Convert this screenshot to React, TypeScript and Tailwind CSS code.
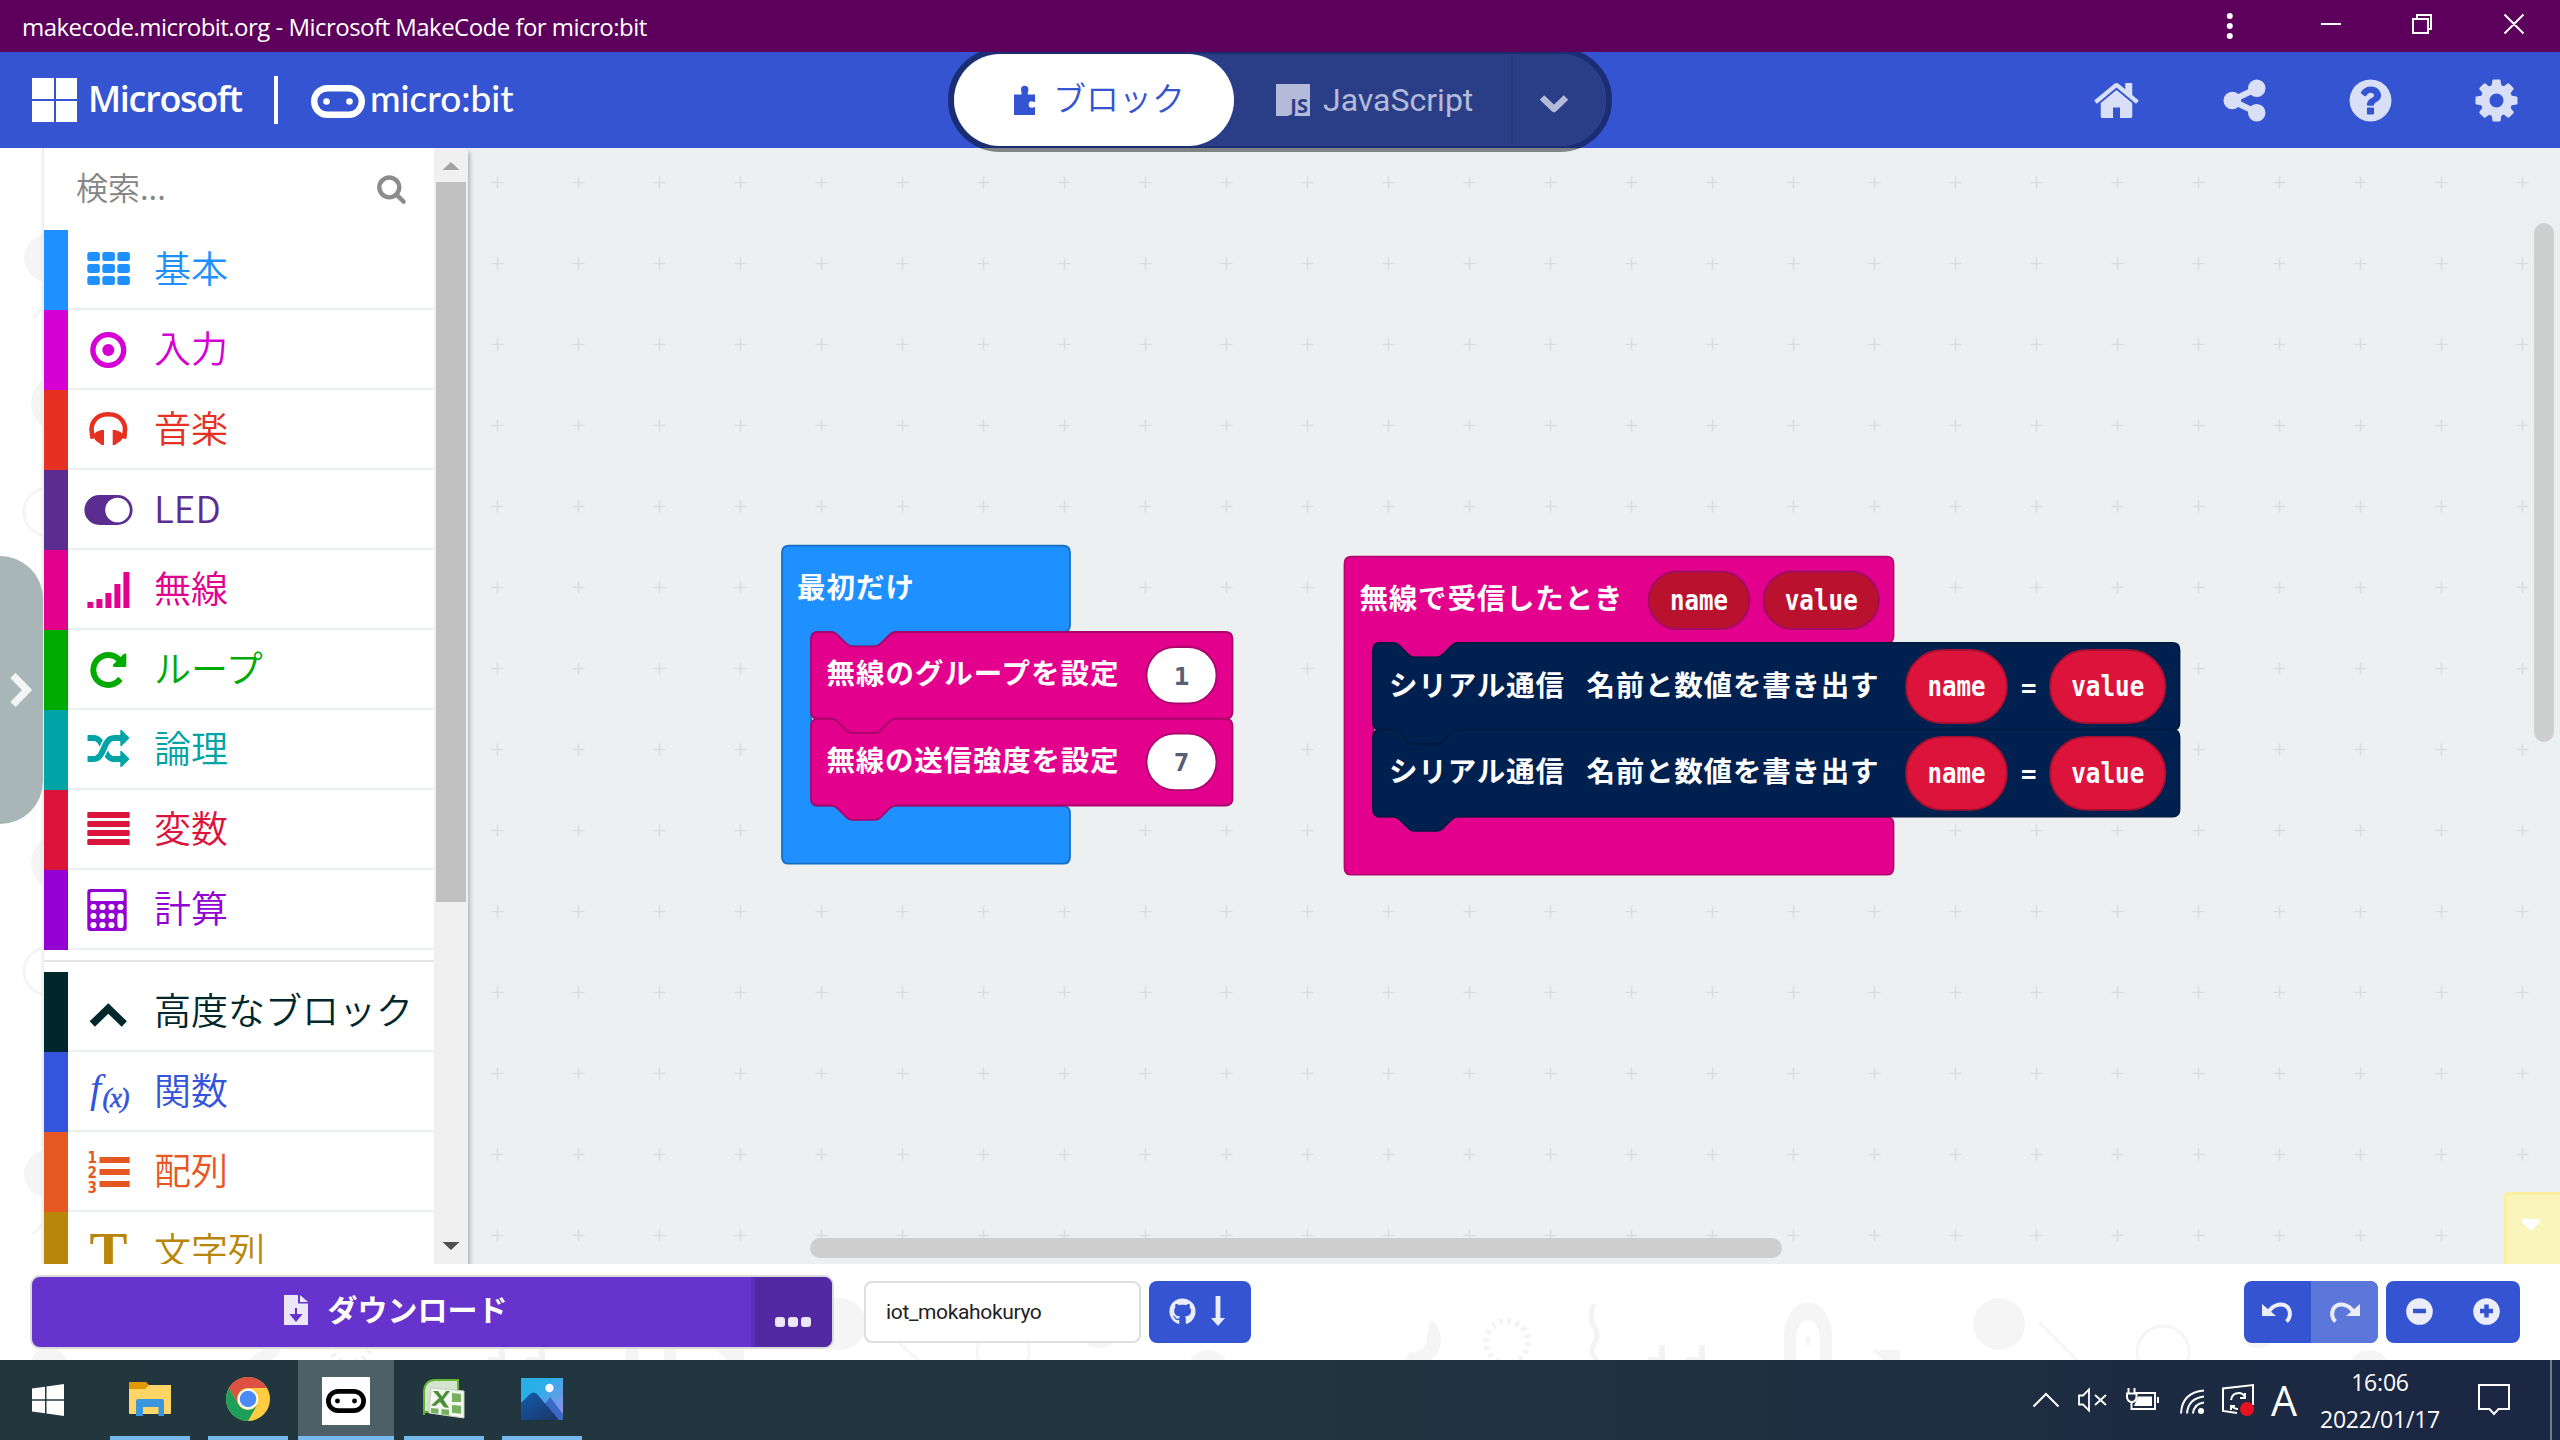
import type { ReactNode } from 'react';
import { FaGithub } from 'react-icons/fa';

const JP = "'Noto Sans CJK JP', sans-serif";

const P = {
  cog: 'M1024 896q0-106-75-181t-181-75-181 75-75 181 75 181 181 75 181-75 75-181zm512-109v222q0 12-8 23t-20 13l-185 28q-19 54-39 91 35 50 107 138 10 12 10 25t-9 23q-27 37-99 108t-94 71q-12 0-26-9l-138-108q-44 23-91 38-16 136-29 186-7 28-36 28h-222q-14 0-24.5-8.5t-11.5-21.5l-28-184q-49-16-90-37l-141 107q-10 9-25 9-14 0-25-11-126-114-165-168-7-10-7-23 0-12 8-23 15-21 51-66.5t54-70.5q-27-50-41-99l-183-27q-13-2-21-12.5t-8-23.5v-222q0-12 8-23t19-13l186-28q14-46 39-92-40-57-107-138-10-12-10-24 0-10 9-23 26-36 98.5-107.5t94.5-71.5q13 0 26 10l138 107q44-23 91-38 16-136 29-186 7-28 36-28h222q14 0 24.5 8.5t11.5 21.5l28 184q49 16 90 37l142-107q9-9 24-9 13 0 25 10 129 119 165 170 7 8 7 22 0 12-8 23-15 21-51 66.5t-54 70.5q26 50 41 98l183 28q13 2 21 12.5t8 23.5z',
  home: 'M1472 992v480q0 26-19 45t-45 19h-384v-384h-256v384h-384q-26 0-45-19t-19-45v-480q0-1 .5-3t.5-3l575-474 575 474q1 2 1 6zm223-69l-62 74q-8 9-21 11h-3q-13 0-21-7l-692-577-692 577q-12 8-24 7-13-2-21-11l-62-74q-8-10-7-23.5t11-21.5l719-599q32-26 76-26t76 26l244 204v-195q0-14 9-23t23-9h192q14 0 23 9t9 23v408l219 182q10 8 11 21.5t-7 23.5z',
  share: 'M1344 1024q133 0 226.5 93.5t93.5 226.5-93.5 226.5-226.5 93.5-226.5-93.5-93.5-226.5q0-12 2-34l-360-180q-92 86-218 86-133 0-226.5-93.5t-93.5-226.5 93.5-226.5 226.5-93.5q126 0 218 86l360-180q-2-22-2-34 0-133 93.5-226.5t226.5-93.5 226.5 93.5 93.5 226.5-93.5 226.5-226.5 93.5q-126 0-218-86l-360 180q2 22 2 34t-2 34l360 180q92-86 218-86z',
  help: 'M1024 1376v-192q0-14-9-23t-23-9h-192q-14 0-23 9t-9 23v192q0 14 9 23t23 9h192q14 0 23-9t9-23zm256-672q0-88-55.5-163t-138.5-116-170-41q-243 0-371 213-15 24 8 42l132 100q7 6 19 6 16 0 25-12 53-68 86-92 34-24 86-24 48 0 85.5 26t37.5 59q0 38-20 61t-68 45q-63 28-115.5 86.5t-52.5 125.5v36q0 14 9 23t23 9h192q14 0 23-9t9-23q0-19 21.5-49.5t54.5-49.5q32-18 49-28.5t46-35 44.5-48 28-60.5 12.5-81zm384 192q0 209-103 385.5t-279.5 279.5-385.5 103-385.5-103-279.5-279.5-103-385.5 103-385.5 279.5-279.5 385.5-103 385.5 103 279.5 279.5 103 385.5z',
  search: 'M1216 832q0-185-131.5-316.5t-316.5-131.5-316.5 131.5-131.5 316.5 131.5 316.5 316.5 131.5 316.5-131.5 131.5-316.5zm512 832q0 52-38 90t-90 38q-54 0-90-38l-343-342q-179 124-399 124-143 0-273.5-55.5t-225-150-150-225-55.5-273.5 55.5-273.5 150-225 225-150 273.5-55.5 273.5 55.5 225 150 150 225 55.5 273.5q0 220-124 399l343 343q37 37 37 90z',
  repeat: 'M1664 256v448q0 26-19 45t-45 19h-448q-42 0-59-40-17-39 14-69l138-138q-148-137-349-137-104 0-198.5 40.5t-163.5 109.5-109.5 163.5-40.5 198.5 40.5 198.5 109.5 163.5 163.5 109.5 198.5 40.5q119 0 225-52t179-147q7-10 23-12 15 0 25 9l137 138q9 8 9.5 20.5t-7.5 22.5q-109 132-264 204.5t-327 72.5q-156 0-298-61t-245-164-164-245-61-298 61-298 164-245 245-164 298-61q147 0 284.5 55.5t244.5 156.5l130-129q29-31 70-14 39 17 39 59z',
  random: 'M666 481q-60 92-137 273-22-45-37-72.5t-40.5-63.5-51-56.5-63-35-81.5-14.5h-224q-14 0-23-9t-9-23v-192q0-14 9-23t23-9h224q250 0 410 225zm1126 799q0 14-9 23l-320 320q-9 9-23 9-13 0-22.5-9.5t-9.5-22.5v-192q-32 0-85 .5t-81 1-73-1-71-5-64-10.5-63-18.5-58-28.5-59-40-55-53.5-56-69.5q59-93 136-273 22 45 37 72.5t40.5 63.5 51 56.5 63 35 81.5 14.5h256v-192q0-14 9-23t23-9q12 0 24 10l319 319q9 9 9 23zm0-896q0 14-9 23l-320 320q-9 9-23 9-13 0-22.5-9.5t-9.5-22.5v-192h-256q-48 0-87 15t-69 45-51 61.5-45 77.5q-32 62-78 171-29 66-49.5 111t-54 105-64 100-74 83-90 68.5-106.5 42-128 16.5h-224q-14 0-23-9t-9-23v-192q0-14 9-23t23-9h224q48 0 87-15t69-45 51-61.5 45-77.5q32-62 78-171 29-66 49.5-111t54-105 64-100 74-83 90-68.5 106.5-42 128-16.5h256v-192q0-14 9-23t23-9q12 0 24 10l319 319q9 9 9 23z',
};

function Glyph({ d, size, box = '0 0 1792 1792', className = '' }: { d: string; size: number; box?: string; className?: string }) {
  return (
    <svg width={size} height={size} viewBox={box} fill="currentColor" className={`shrink-0 ${className}`}>
      <path d={d} />
    </svg>
  );
}

/* ---------- Toolbox icons, drawn on a 56 x 56 grid ---------- */

const fa = (d: string) => (
  <svg x="7.3" y="8" width="42" height="42" viewBox="0 0 1792 1792">
    <path d={d} />
  </svg>
);

const icons: Record<string, ReactNode> = {
  grid: [7.3, 22.3, 37.3].flatMap((x) =>
    [11, 23, 35].map((y) => <rect key={`${x}-${y}`} x={x} y={y} width="12.6" height="9" rx="2.5" />),
  ),
  target: (
    <>
      <circle cx="28.3" cy="29" r="15.4" fill="none" stroke="currentColor" strokeWidth="5.4" />
      <circle cx="28.3" cy="29" r="6" />
    </>
  ),
  headphones: (
    <>
      <path
        d="M13.500 36.500C8 24 15 13.300 28.300 13.300S48.600 24 43.100 36.500"
        fill="none"
        stroke="currentColor"
        strokeWidth="4.600"
      />
      <path d="M24 29v15h-2.500c-1-2-6-3-7-6.500l-4 .5-1-5 5.500-.5c1-2.500 4.500-2.500 6.500-3.500zM32.700 29v15h2.500c1-2 6-3 7-6.500l4 .5 1-5-5.500-.5c-1-2.500-4.500-2.500-6.500-3.500z" />
    </>
  ),
  toggle: (
    <>
      <rect x="4.400" y="14" width="48.200" height="30" rx="15" />
      <circle cx="37.500" cy="29" r="12.300" fill="#fff" />
    </>
  ),
  signal: [41, 38, 32, 23, 11].map((y, i) => (
    <rect key={y} x={7.4 + i * 9} y={y} width="6" height={47 - y} rx="0.5" />
  )),
  repeat: fa(P.repeat),
  random: fa(P.random),
  lines: [11, 20, 29, 38].map((y) => <rect key={y} x="7.300" y={y} width="42.400" height="6" rx="1" />),
  calc: (
    <>
      <rect x="7.300" y="8" width="39.400" height="42" rx="3" />
      <rect x="10.300" y="11" width="33.400" height="9" rx="1.500" fill="#fff" />
      {[13.5, 22.5, 31.5].flatMap((x) =>
        [26, 35, 44].map((y) => <circle key={`${x}-${y}`} cx={x} cy={y} r="3.100" fill="#fff" />),
      )}
      <circle cx="40.500" cy="26" r="3.100" fill="#fff" />
      <rect x="37.400" y="32" width="6.200" height="15" rx="3.100" fill="#fff" />
    </>
  ),
  up: <path d="M12.300 41L28.300 25.500 44.300 41" fill="none" stroke="currentColor" strokeWidth="7.500" />,
  fx: (
    <>
      <text x="10" y="38.500" fontSize="40" fontStyle="italic" fontFamily="'Liberation Serif', serif">
        f
      </text>
      <text x="22.500" y="43.500" fontSize="27" fontStyle="italic" fontFamily="'Liberation Serif', serif" textLength="27" stroke="currentColor" strokeWidth="0.600">
        (x)
      </text>
    </>
  ),
  list: (
    <>
      {[14, 26, 38].map((y) => (
        <rect key={y} x="19.500" y={y} width="30.200" height="6" />
      ))}
      {['1', '2', '3'].map((n, i) => (
        <text key={n} x="7.500" y={20 + i * 15} fontSize="16" fontWeight="700" fontFamily="'DejaVu Sans', sans-serif" textLength="9.500" lengthAdjust="spacingAndGlyphs">
          {n}
        </text>
      ))}
    </>
  ),
  text: (
    <text x="9.500" y="47" fontSize="54" fontWeight="700" fontFamily="'Liberation Serif', serif" textLength="38" lengthAdjust="spacingAndGlyphs">
      T
    </text>
  ),
};

type Cat = { label: string; icon: string; text: string; bar: string };

const basic: Cat[] = [
  { label: '基本', icon: 'grid', text: 'text-[#1e90ff]', bar: 'bg-[#1e90ff]' },
  { label: '入力', icon: 'target', text: 'text-[#d400d4]', bar: 'bg-[#d400d4]' },
  { label: '音楽', icon: 'headphones', text: 'text-[#e63022]', bar: 'bg-[#e63022]' },
  { label: 'LED', icon: 'toggle', text: 'text-[#5c2d91]', bar: 'bg-[#5c2d91]' },
  { label: '無線', icon: 'signal', text: 'text-[#e3008c]', bar: 'bg-[#e3008c]' },
  { label: 'ループ', icon: 'repeat', text: 'text-[#00aa00]', bar: 'bg-[#00aa00]' },
  { label: '論理', icon: 'random', text: 'text-[#00a4a6]', bar: 'bg-[#00a4a6]' },
  { label: '変数', icon: 'lines', text: 'text-[#dc143c]', bar: 'bg-[#dc143c]' },
  { label: '計算', icon: 'calc', text: 'text-[#9400d3]', bar: 'bg-[#9400d3]' },
];

const advanced: Cat[] = [
  { label: '高度なブロック', icon: 'up', text: 'text-[#00272b]', bar: 'bg-[#00272b]' },
  { label: '関数', icon: 'fx', text: 'text-[#3455db]', bar: 'bg-[#3455db]' },
  { label: '配列', icon: 'list', text: 'text-[#e65722]', bar: 'bg-[#e65722]' },
  { label: '文字列', icon: 'text', text: 'text-[#b8860b]', bar: 'bg-[#b8860b]' },
];

function Category({ c }: { c: Cat }) {
  return (
    <div className={`flex h-20 shrink-0 ${c.text}`}>
      <div className={`w-6 ${c.bar}`} />
      <div className="flex flex-1 items-center border-b-2 border-[#ecf0f1] pl-3">
        <svg width="56" height="56" viewBox="0 0 56 56" fill="currentColor" className="shrink-0">
          {icons[c.icon]}
        </svg>
        <span className="-mt-[3px] ml-[18px] whitespace-nowrap font-['Noto_Sans_CJK_JP',sans-serif] text-[37px] font-[350] leading-none">
          {c.label}
        </span>
      </div>
    </div>
  );
}

/* ---------- Page chrome ---------- */

function TitleBar() {
  return (
    <div className="flex h-[52px] shrink-0 items-center justify-between bg-[#5c005c] text-white">
      <span className="ml-[22px] mt-[2px] whitespace-nowrap font-['Open_Sans',sans-serif] text-[24px] leading-none tracking-[-0.530px]">
        makecode.microbit.org - Microsoft MakeCode for micro:bit
      </span>
      <svg width="340" height="52" viewBox="2220 0 340 52" fill="none" stroke="#fff" strokeWidth="2">
        <g fill="#fff" stroke="none">
          <circle cx="2229.800" cy="16" r="3" />
          <circle cx="2229.800" cy="26" r="3" />
          <circle cx="2229.800" cy="36" r="3" />
        </g>
        <path d="M2321 24h20M2413 19h15v14h-15zM2417 19v-4h14v14h-4M2504.500 14.500l19 19M2523.500 14.500l-19 19" />
      </svg>
    </div>
  );
}

function Face({ className, w, h }: { className?: string; w: number; h: number }) {
  return (
    <svg width={w} height={h} viewBox="0 0 54 33" fill="currentColor" preserveAspectRatio="none" className={className}>
      <rect x="3.200" y="3.200" width="47.600" height="26.600" rx="13.300" fill="none" stroke="currentColor" strokeWidth="6.400" />
      <circle cx="15.500" cy="16.500" r="3.300" />
      <circle cx="38.500" cy="16.500" r="3.300" />
    </svg>
  );
}

function Header() {
  return (
    <header className="relative z-20 flex h-24 shrink-0 items-center bg-[#3454d1] text-white">
      <div className="ml-8 grid h-11 w-[45px] grid-cols-2 grid-rows-2 gap-[2px]">
        <i className="bg-white" />
        <i className="bg-white" />
        <i className="bg-white" />
        <i className="bg-white" />
      </div>
      <span className="-mt-[2px] ml-[11px] w-[155px] whitespace-nowrap font-['Open_Sans',sans-serif] text-[36px] font-semibold leading-none tracking-[-1.300px]">
        Microsoft
      </span>
      <i className="ml-[31px] h-12 w-1 bg-white" />
      <Face w={54} h={33} className="ml-[33px] mt-[3px]" />
      <span className="-mt-[6px] ml-[5px] whitespace-nowrap font-['Lato',sans-serif] text-[37px] font-medium leading-none">micro:bit</span>

      <div className="absolute left-[948px] top-0 h-[100px] w-[664px] overflow-hidden">
        <div className="-mt-1 flex h-[104px] rounded-full border-[6px] border-black/45">
          <div className="flex flex-1 items-center rounded-full bg-[#2a3e87]">
            <div className="flex h-[92px] w-[280px] items-center rounded-full bg-white text-[#3454d1]">
              <svg width="24" height="30" viewBox="0 0 24 30" fill="currentColor" className="ml-[59px]">
                <path d="M1 9.500h7.500C9 7.500 8 6.500 8 4.500a3.700 3.700 0 0 1 7.400 0c0 2-1 3-.5 5H22v7.500c-1.500 0-2-.8-3.300-.8a3 3.300 0 0 0 0 6.600c1.300 0 1.800-.8 3.300-.8V30H1z" />
              </svg>
              <span className="-mt-[5px] ml-[16px] whitespace-nowrap font-['Noto_Sans_CJK_JP',sans-serif] text-[33px] font-[350] leading-none">
                ブロック
              </span>
            </div>
            <div className="flex h-[92px] w-[279px] items-center border-r-2 border-[#27397c] pl-[42px] text-[#b4bbd8]">
              <span className="flex h-8 w-[34px] items-end justify-end bg-[#b4bbd8] pr-[2px] font-['Open_Sans',sans-serif] text-[20px] font-bold leading-[21px] text-[#2a3e87]">
                JS
              </span>
              <span className="ml-[13px] font-['Roboto',sans-serif] text-[32px] leading-none">JavaScript</span>
            </div>
            <svg width="30" height="20" viewBox="0 0 30 20" className="ml-[26px] mt-[8px]">
              <path d="M3 3.500L15 15 27 3.500" fill="none" stroke="#b4bbd8" strokeWidth="6.500" strokeLinejoin="round" />
            </svg>
          </div>
        </div>
      </div>

      <div className="ml-auto mr-[39px] flex items-center gap-[77px] text-[#d9dff7]">
        <Glyph d={P.home} size={49} className="-translate-x-[2px]" />
        <Glyph d={P.share} size={49} />
        <Glyph d={P.help} size={49} />
        <Glyph d={P.cog} size={49} box="-128 0 1792 1792" />
      </div>
    </header>
  );
}

function LeftStrip() {
  return (
    <div className="relative w-[42px] shrink-0 overflow-hidden bg-white">
      <svg width="42" height="1116" viewBox="0 148 42 1116" fill="#f5f5f5" className="absolute inset-0">
        <circle cx="48" cy="258" r="24" />
        <circle cx="60" cy="403" r="29" />
        <circle cx="48" cy="1174" r="24" />
        <circle cx="60" cy="863" r="29" />
        <g fill="none" stroke="#f5f5f5" strokeWidth="3">
          <circle cx="48" cy="512" r="24" />
          <circle cx="48" cy="971" r="24" />
          <path d="M33 318l14-14M33 1234l14-14" />
        </g>
      </svg>
    </div>
  );
}

function Sidebar() {
  return (
    <aside className="relative z-10 flex w-[426px] shrink-0 border-l-2 border-[#ecf0f1] bg-white shadow-[2px_4px_4px_rgba(0,0,0,0.25)]">
      <div className="flex w-[390px] flex-col overflow-hidden">
        <div className="flex h-[82px] shrink-0 items-center justify-between pl-8 pr-[27px] text-[#858585]">
          <span className="-mt-[6px] font-['Noto_Sans_CJK_JP',sans-serif] text-[32px] font-[350] leading-none">検索...</span>
          <Glyph d={P.search} size={31} className="-mt-[1px] text-[#8c8c8c]" />
        </div>
        {basic.map((c) => (
          <Category key={c.label} c={c} />
        ))}
        <div className="my-[10px] h-[2px] shrink-0 bg-[#e4e4e4]" />
        {advanced.map((c) => (
          <Category key={c.label} c={c} />
        ))}
      </div>
      <div className="flex w-[34px] flex-col items-center bg-[#f0f0f0]">
        <svg width="34" height="34" viewBox="0 0 34 34">
          <path d="M17 14l8.500 8h-17z" fill="#a3a3a3" />
        </svg>
        <div className="h-[720px] w-[30px] bg-[#c1c1c1]" />
        <svg width="34" height="34" viewBox="0 0 34 34" className="mt-auto">
          <path d="M17 20l8.500-8h-17z" fill="#505050" />
        </svg>
      </div>
      <div className="absolute left-[-44px] top-[408px] flex h-[268px] w-[43px] items-center rounded-r-[43px] bg-[#a9b6b7] pl-2">
        <svg width="26" height="38" viewBox="0 0 26 38">
          <path d="M5 4.500L19 19 5 33.500" fill="none" stroke="#f4f6f6" strokeWidth="7.500" />
        </svg>
      </div>
    </aside>
  );
}

/* ---------- Blocks ---------- */

const NOTCH = 'c3.600 0 5.400 1.800 7.200 3.600l7.200 7.200c1.800 1.800 3.600 3.600 7.200 3.600h21.700c3.600 0 5.400-1.800 7.200-3.600l7.200-7.200c1.800-1.800 3.600-3.600 7.200-3.600';
const TAB = 'c-3.600 0-5.400 1.800-7.200 3.600l-7.200 7.200c-1.800 1.800-3.600 3.600-7.200 3.600h-21.700c-3.600 0-5.400-1.800-7.200-3.600l-7.200-7.200c-1.800-1.800-3.600-3.600-7.200-3.600';

function Statement({ x, y, w, fill, stroke }: { x: number; y: number; w: number; fill: string; stroke: string }) {
  const h = 86.7;
  const d = `M${x} ${y + 7}q0-7 7-7H${x + 20}${NOTCH}H${x + w - 7}q7 0 7 7V${y + h - 7}q0 7-7 7H${x + 85}${TAB}H${x + 7}q-7 0-7-7z`;
  return <path d={d} fill={fill} stroke={stroke} strokeWidth="1.800" />;
}

function Hat({ x, y, w, fill, stroke }: { x: number; y: number; w: number; fill: string; stroke: string }) {
  const r = x + w;
  const d = `M${x} ${y + 7}q0-7 7-7H${r - 7}q7 0 7 7V${y + 79.3}q0 7-7 7H${x + 114}${TAB}H${x + 36}q-7 0-7 7V${y + 253.500}q0 7 7 7H${r - 7}q7 0 7 7V${y + 311}q0 7-7 7H${x + 7}q-7 0-7-7z`;
  return <path d={d} fill={fill} stroke={stroke} strokeWidth="1.800" />;
}

function Label({ x, y, w, children }: { x: number; y: number; w: number; children: string }) {
  return (
    <text x={x} y={y} fontSize="28.500" fontWeight="700" fontFamily={JP} fill="#fff" textLength={w}>
      {children}
    </text>
  );
}

type PillProps = { x: number; y: number; w: number; h: number; fill: string; stroke: string; color?: string; tw: number; size?: number; children: string };

function Pill({ x, y, w, h, fill, stroke, color = '#fff', tw, size = 28, children }: PillProps) {
  return (
    <g>
      <rect x={x} y={y} width={w} height={h} rx={h / 2} fill={fill} stroke={stroke} strokeWidth="1.800" />
      <text x={x + w / 2 - tw / 2} y={y + h / 2 + (size === 28 ? 9.7 : 9.5)} fontSize={size} fontWeight="700" fontFamily="'DejaVu Sans Mono', monospace" fill={color} textLength={tw} lengthAdjust="spacingAndGlyphs">
        {children}
      </text>
    </g>
  );
}

function Workspace() {
  return (
    <main className="relative flex-1 overflow-hidden bg-[#ecf0f1]">
      <svg width="2092" height="1116" viewBox="468 148 2092 1116" className="absolute inset-0">
        <defs>
          <pattern id="grid" x="457" y="142" width="81" height="81" patternUnits="userSpaceOnUse">
            <path d="M34.500 40.500h12M40.500 34.500v12" stroke="#d9dddd" strokeWidth="1.600" />
          </pattern>
        </defs>
        <rect x="468" y="148" width="2092" height="1116" fill="url(#grid)" />
      </svg>

      <svg width="460" height="324" viewBox="780 544 460 324" className="absolute left-[312px] top-[396px]">
        <Hat x={782} y={545.7} w={288} fill="#1e90ff" stroke="#176fc1" />
        <Label x={797} y={597.5} w={117}>最初だけ</Label>
        <Statement x={811} y={632} w={421.5} fill="#e3008c" stroke="#a8066c" />
        <Statement x={811} y={718.8} w={421.5} fill="#e3008c" stroke="#a8066c" />
        <Label x={826.5} y={684} w={292}>無線のグループを設定</Label>
        <Label x={826.5} y={771} w={292}>無線の送信強度を設定</Label>
        <Pill x={1146.5} y={647} w={70} h={56.5} fill="#fff" stroke="#a8066c" color="#575e75" tw={15.6} size={25.6}>1</Pill>
        <Pill x={1146.5} y={733.7} w={70} h={56.5} fill="#fff" stroke="#a8066c" color="#575e75" tw={15.6} size={25.6}>7</Pill>
      </svg>

      <svg width="842" height="324" viewBox="1342 554 842 324" className="absolute left-[874px] top-[406px]">
        <Hat x={1344.5} y={556.7} w={549} fill="#e3008c" stroke="#b6066f" />
        <Label x={1359.5} y={609} w={263}>無線で受信したとき</Label>
        <Pill x={1648.5} y={571.5} w={101} h={57.5} fill="#ba112f" stroke="#a00c63" tw={58}>name</Pill>
        <Pill x={1763.5} y={571.5} w={115.5} h={57.5} fill="#ba112f" stroke="#a00c63" tw={73}>value</Pill>
        <Statement x={1373} y={643} w={806.5} fill="#002050" stroke="#001a40" />
        <Statement x={1373} y={729.8} w={806.5} fill="#002050" stroke="#001a40" />
        {[0, 86.8].map((dy) => (
          <g key={dy}>
            <Label x={1389} y={695.5 + dy} w={175}>シリアル通信</Label>
            <Label x={1586.5} y={695.5 + dy} w={292}>名前と数値を書き出す</Label>
            <Pill x={1906} y={650 + dy} w={101} h={73} fill="#dc143c" stroke="#a60f2f" tw={58}>name</Pill>
            <text x="2021" y={696.5 + dy} fontSize="26" fontWeight="700" fontFamily="'DejaVu Sans Mono', monospace" fill="#fff" textLength="15.500" lengthAdjust="spacingAndGlyphs">=</text>
            <Pill x={2050} y={650 + dy} w={115.5} h={73} fill="#dc143c" stroke="#a60f2f" tw={73}>value</Pill>
          </g>
        ))}
      </svg>

      <div className="absolute right-[6px] top-[75px] h-[519px] w-5 rounded-full bg-[#cecece]" />
      <div className="absolute bottom-[6px] left-[342px] h-5 w-[972px] rounded-full bg-[#cecece]" />
      <div className="absolute bottom-0 right-0 flex h-[72px] w-[56px] items-center justify-center rounded-tl-[4px] border-l-[3px] border-t-[3px] border-[#fcf0a0] bg-[#faf4bd]">
        <svg width="20" height="12" viewBox="0 0 20 12" className="-mt-[9px] mr-[5px]">
          <path d="M1 0h18v3L10 12 1 3z" fill="#fff" />
        </svg>
      </div>
    </main>
  );
}

/* ---------- Footer ---------- */

function FooterPattern() {
  return (
    <svg width="2560" height="96" viewBox="0 1264 2560 96" fill="#f5f5f5" className="absolute inset-0">
      <circle cx="49" cy="1367" r="19" />
      <circle cx="840" cy="1324" r="26" />
      <circle cx="1999" cy="1324" r="26" />
      <circle cx="1208" cy="1370" r="20" />
      <circle cx="2369" cy="1370" r="20" />
      <ellipse cx="1099" cy="1338" rx="15" ry="10" />
      <ellipse cx="2258" cy="1338" rx="15" ry="10" />
      <path d="M1432 1320q9 8 9 20 0 12-10 20h-25q3-10 7-8 14-1 14-14 0-10 5-18z" />
      <path d="M1872 1350h28v20q-14-6-28-20zM716 1350h28v20q-14-6-28-20z" />
      <path d="M1784 1360v-24a24 34 0 0 1 48 0v24h-12v-22a12 18 0 0 0-24 0v22zM1808 1335l3 6-3 7-3-7zM626 1346h12v14h-12zM664 1346h12v14h-12z" />
      <path d="M268 1346h14q-4 12-10 14h-24z" />
      <g fill="none" stroke="#f5f5f5" strokeWidth="3">
        <circle cx="1003" cy="1352" r="26" />
        <circle cx="2163" cy="1352" r="26" />
        <path d="M898 1342l22 20M2039 1322l38 38" />
      </g>
      <g fill="none" stroke="#f3f3f3" strokeWidth="6">
        <circle cx="1507" cy="1342" r="21" strokeDasharray="3.500 4.750" />
        <circle cx="350" cy="1342" r="21" strokeDasharray="3.500 4.750" />
        <path d="M1594 1304q-6 12 0 22t0 18 4 18" strokeWidth="5" />
        <path d="M1648 1360h14v-15M1686 1360h16v-15M488 1360h14v-15M526 1360h16v-15" />
      </g>
    </svg>
  );
}

function Footer() {
  return (
    <footer className="relative flex h-24 shrink-0 items-center overflow-hidden bg-white">
      <FooterPattern />
      <div className="relative ml-[30px] mt-[11px] flex h-[74px] w-[804px] self-start overflow-hidden rounded-[10px] border-2 border-[#dadadd] bg-[#6633cc]">
        <div className="flex flex-1 items-center justify-center pb-1 pl-[8px]">
          <svg width="24" height="30" viewBox="0 0 24 30">
            <path d="M0 0h14v8.500h10V30H0z" fill="#ece6f9" />
            <path d="M16 0l8 7h-8z" fill="#ece6f9" />
            <path d="M12 13v9M7.500 20h9L12 25.500z" fill="#6633cc" stroke="#6633cc" strokeWidth="2" />
          </svg>
          <span className="-mt-[4px] ml-[20px] whitespace-nowrap font-['Noto_Sans_CJK_JP',sans-serif] text-[30px] font-bold leading-none text-white">
            ダウンロード
          </span>
        </div>
        <div className="flex w-[81px] items-end justify-center gap-[3px] border-l-4 border-[#5c2fb8] bg-[#5229a3] pb-[20px] pr-[2px]">
          <i className="h-[10px] w-[10px] rounded-[3px] bg-[#ece6f9]" />
          <i className="h-[10px] w-[10px] rounded-[3px] bg-[#ece6f9]" />
          <i className="h-[10px] w-[10px] rounded-[3px] bg-[#ece6f9]" />
        </div>
      </div>
      <div className="relative ml-[30px] flex h-[62px] w-[277px] items-center rounded-lg border-2 border-[#dedede] bg-white pl-[20px] font-['Roboto',sans-serif] text-[21px] leading-none tracking-[-0.350px] text-[#222]">
        iot_mokahokuryo
      </div>
      <div className="relative ml-2 flex h-[62px] w-[102px] items-center rounded-lg bg-[#3454d1] pl-5 text-[#ebeefa]">
        <FaGithub size={27} className="-mt-[2px]" />
        <svg width="14" height="30" viewBox="0 0 14 30" fill="currentColor" className="-mt-[2px] ml-[15px]">
          <path d="M4.600 0h4.800v22H14l-7 8-7-8h4.600z" />
        </svg>
      </div>
      <div className="relative ml-auto flex h-[62px] w-[134px] overflow-hidden rounded-lg bg-[#3454d1] text-[#ebeefa]">
        <div className="flex flex-1 items-center justify-center">
          <svg width="31" height="24" viewBox="0 0 31 24">
            <path d="M6 13C11 3.500 22 2 26.500 8.500 29 13 28 18.500 24.500 21.500" fill="none" stroke="currentColor" strokeWidth="4" />
            <path d="M0 4l14 12H0z" fill="currentColor" />
          </svg>
        </div>
        <div className="flex flex-1 items-center justify-center bg-[#5c76da]">
          <svg width="31" height="24" viewBox="0 0 31 24" className="-scale-x-100">
            <path d="M6 13C11 3.500 22 2 26.500 8.500 29 13 28 18.500 24.500 21.500" fill="none" stroke="currentColor" strokeWidth="4" />
            <path d="M0 4l14 12H0z" fill="currentColor" />
          </svg>
        </div>
      </div>
      <div className="relative ml-2 mr-10 flex h-[62px] w-[134px] items-center justify-around rounded-lg bg-[#3454d1]">
        {['M7 13h13', 'M7 13h13M13.500 6.500v13'].map((d) => (
          <svg key={d} width="27" height="27" viewBox="0 0 27 27" className="-mt-[2px]">
            <circle cx="13.500" cy="13.500" r="13.300" fill="#ebeefa" />
            <path d={d} stroke="#3454d1" strokeWidth="4.500" />
          </svg>
        ))}
      </div>
    </footer>
  );
}

/* ---------- Taskbar ---------- */

function Task({ children, active }: { children: ReactNode; active?: boolean }) {
  return (
    <div className="flex h-20 w-[98px] flex-col items-center">
      <div className={`flex w-24 flex-1 items-center justify-center pt-[2px] ${active ? 'bg-[#4e6067]' : ''}`}>{children}</div>
      <div className={`h-1 bg-[#76b9ed] ${active ? 'w-24' : 'w-20'}`} />
    </div>
  );
}

function Taskbar() {
  return (
    <div className="flex h-20 shrink-0 bg-gradient-to-r from-[#22363e] via-[#20353f] to-[#1b2643]">
      <div className="flex w-[101px] items-center pl-8">
        <svg width="32" height="32" viewBox="0 0 32 32" fill="#fff">
          <path d="M0 4.500L13 2.700V15.300H0zM14.500 2.400L32 0v15.300H14.500zM0 16.700h13v12.600L0 27.500zM14.500 16.700H32V32l-17.500-2.500z" />
        </svg>
      </div>
      <Task>
        <svg width="42" height="36" viewBox="0 0 42 36">
          <path d="M0 1h17l3 3v5H0z" fill="#e09a00" />
          <path d="M0 8h16l4-4h22v28q0 1-1 1H1q-1 0-1-1z" fill="#ffd566" />
          <path d="M7 35V20q0-2 2-2h24q2 0 2 2v15h-5.500V26H14v9z" fill="#3a96dd" />
        </svg>
      </Task>
      <Task>
        <svg width="44" height="44" viewBox="0 0 44 44">
          <circle cx="22" cy="22" r="22" fill="#ffcd42" />
          <path d="M2.950 11A22 22 0 0 1 41.050 11H22A11 11 0 0 0 12.500 27.500z" fill="#dd5144" />
          <path d="M2.950 11A22 22 0 0 0 22 44L31.500 27.500A11 11 0 0 1 12.500 27.500z" fill="#1c9f5a" />
          <circle cx="22" cy="22" r="10.300" fill="#fff" />
          <circle cx="22" cy="22" r="8.300" fill="#4c8bf5" />
        </svg>
      </Task>
      <Task active>
        <div className="mt-1 flex h-12 w-12 items-center justify-center bg-white text-black">
          <Face w={40} h={24} />
        </div>
      </Task>
      <Task>
        <svg width="42" height="40" viewBox="0 0 42 40">
          <path d="M1 36V12Q2 1 12 1h23v32H1z" fill="#d3e3cd" stroke="#63b530" strokeWidth="2" />
          <path d="M8 9l33 3v27L6 34z" fill="#f4f7f1" stroke="#c4d3bc" />
          <path d="M10 12h5l4 5.500 4-5.500h4l-6.500 8.500L26 29l-5-.8-4-5.200-5 4-4-.5 8-7.500z" fill="#4d8f38" />
          <path d="M29 14l9 1v8h-9zM29 26l9 .8v8l-9-1zM18.500 30l7.500.8v5.500l-7.500-1zM8 29l7.500.8v5l-7.500-1z" fill="#74b05d" />
        </svg>
      </Task>
      <Task>
        <svg width="42" height="42" viewBox="0 0 42 42">
          <defs>
            <linearGradient id="sky" x1="0" y1="0" x2="1" y2="1">
              <stop offset="0.35" stopColor="#29aee8" />
              <stop offset="1" stopColor="#a08be6" />
            </linearGradient>
            <linearGradient id="hill" x1="0" y1="0" x2="1" y2="1">
              <stop offset="0" stopColor="#155baa" />
              <stop offset="1" stopColor="#1a3468" />
            </linearGradient>
          </defs>
          <path d="M0 0h42v42H0z" fill="url(#sky)" />
          <path d="M24 26l5-7 13 17v6H24z" fill="#3a69c6" />
          <path d="M0 25l9-9q4-3 7 0l22 26H0z" fill="url(#hill)" />
          <circle cx="28.500" cy="10" r="4.200" fill="#f4f7fb" />
        </svg>
      </Task>

      <div className="ml-auto flex text-white">
        <svg width="280" height="80" viewBox="2024 1360 280 80" fill="none" stroke="#fff" strokeWidth="2">
          <path d="M2033.500 1406.500l12.500-12.500 12.500 12.500" />
          <path d="M2079 1395.500h4l6-6v21l-6-6h-4zM2095 1395l11 10M2106 1395l-11 10" strokeWidth="1.800" />
          <path d="M2135 1393h20v16h-24M2158 1397v6M2128.500 1388v6M2134.500 1388v6M2131.500 1402v8" />
          <path d="M2138 1396.500h14v9.500h-18z" fill="#fff" stroke="none" />
          <path d="M2127 1393.500h9.500v4q-1 4.500-4.750 4.500t-4.750-4.500z" />
          <path d="M2181 1413.500q1-21 23-23M2187 1413.500q1-15 17-17M2193 1413.500q1-10 11-11" />
          <circle cx="2201" cy="1411" r="3" fill="#fff" stroke="none" />
          <path d="M2237 1413l-14-2v-22.500l30-3.500v20" />
          <path d="M2231 1400q1-7 8-7 4 0 6 4M2245 1393v5h-5M2231 1410v-4h4M2232 1406q2 3 6 3" />
          <circle cx="2247" cy="1409" r="7" fill="#e81123" stroke="none" />
          <text x="2271" y="1416" fontSize="42" fontFamily="'Open Sans', sans-serif" fill="#fff" stroke="none" textLength="26" lengthAdjust="spacingAndGlyphs">
            A
          </text>
        </svg>
        <div className="flex w-[152px] flex-col items-center gap-[13px] pt-[10px] font-['Open_Sans',sans-serif] text-[23px] leading-6 tracking-[-0.200px]">
          <span>16:06</span>
          <span>2022/01/17</span>
        </div>
        <svg width="94" height="80" viewBox="2456 1360 94 80" fill="none" stroke="#fff" strokeWidth="2">
          <path d="M2479 1385h30v24h-10.500l-4.500 5-4.500-5H2479z" />
        </svg>
        <div className="mr-2 h-20 w-[2px] bg-[#727b8c]" />
      </div>
    </div>
  );
}

export default function App() {
  return (
    <div className="flex h-[1440px] w-[2560px] flex-col overflow-hidden bg-white">
      <TitleBar />
      <Header />
      <div className="flex h-[1116px] shrink-0 overflow-hidden">
        <LeftStrip />
        <Sidebar />
        <Workspace />
      </div>
      <Footer />
      <Taskbar />
    </div>
  );
}
